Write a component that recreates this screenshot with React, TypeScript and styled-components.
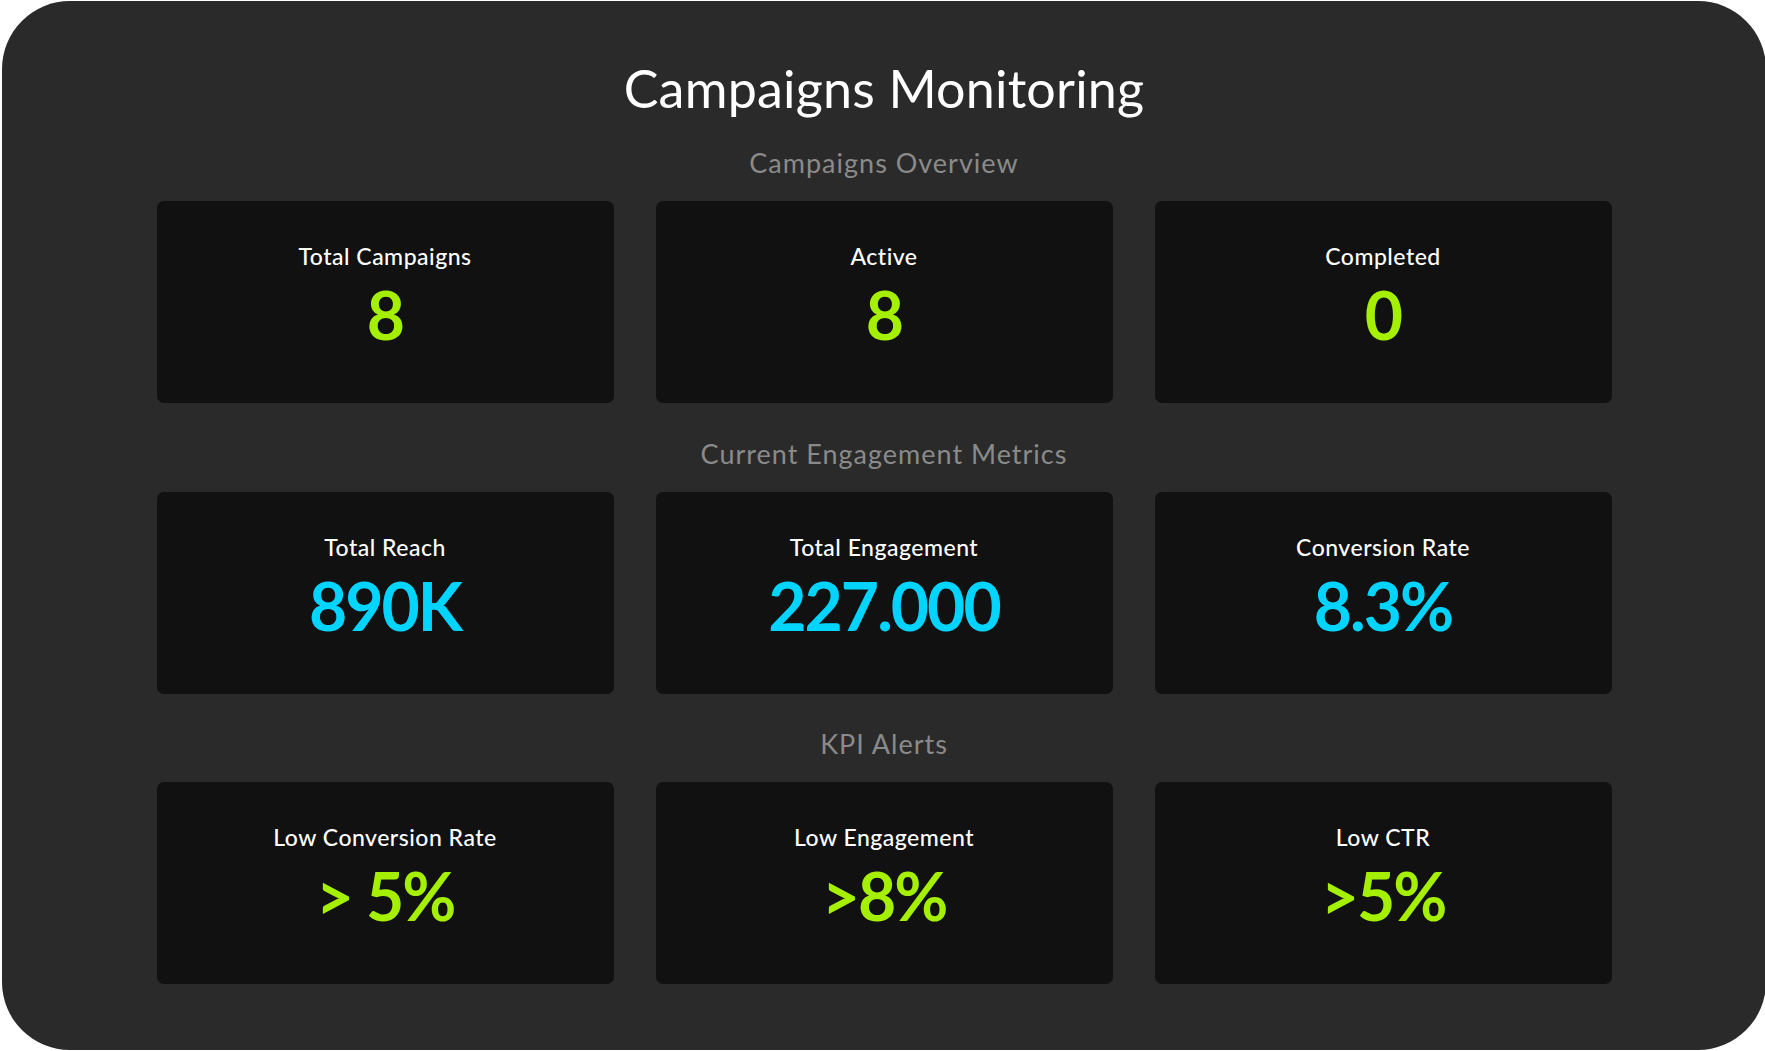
import styled, { createGlobalStyle } from "styled-components";

const GlobalStyle = createGlobalStyle`
  html, body {
    margin: 0;
    padding: 0;
    background: #ffffff;
  }
  body {
    font-family: "Lato", "Noto Sans", sans-serif;
  }
`;

const Panel = styled.main`
  box-sizing: border-box;
  width: 1764px;
  height: 1049px;
  margin: 1px 0 0 2px;
  padding-top: 57px;
  background: #2a2a2a;
  border-radius: 68px;
  display: flex;
  flex-direction: column;
  align-items: center;
`;

const Title = styled.h1`
  margin: 0 0 30px;
  font-size: 52px;
  line-height: 60px;
  font-weight: 400;
  letter-spacing: 0.2px;
  color: #ffffff;
`;

const Section = styled.section`
  display: flex;
  flex-direction: column;
  align-items: center;
  gap: 23px;
  margin-bottom: 35.5px;
`;

const Heading = styled.h2`
  margin: 0;
  font-size: 27px;
  line-height: 30px;
  font-weight: 400;
  letter-spacing: 1px;
  color: #8a8a8a;
`;

const Row = styled.div`
  display: grid;
  grid-template-columns: repeat(3, 457px);
  gap: 42px;
`;

const Card = styled.div`
  box-sizing: border-box;
  height: 202px;
  padding-top: 41px;
  background: #111111;
  border-radius: 7px;
  display: flex;
  flex-direction: column;
  align-items: center;
  gap: 5px;
`;

const Label = styled.div`
  font-size: 23px;
  line-height: 28px;
  font-weight: 500;
  letter-spacing: 0.5px;
  color: #ffffff;
`;

const Value = styled.div<{ $tone: "lime" | "cyan" }>`
  font-size: 66px;
  line-height: 80px;
  font-weight: 700;
  letter-spacing: -2px;
  color: ${({ $tone }) => ($tone === "lime" ? "#a4f000" : "#00d4ff")};
`;

type Metric = { label: string; value: string };

const sections: { heading: string; tone: "lime" | "cyan"; items: Metric[] }[] = [
  {
    heading: "Campaigns Overview",
    tone: "lime",
    items: [
      { label: "Total Campaigns", value: "8" },
      { label: "Active", value: "8" },
      { label: "Completed", value: "0" },
    ],
  },
  {
    heading: "Current Engagement Metrics",
    tone: "cyan",
    items: [
      { label: "Total Reach", value: "890K" },
      { label: "Total Engagement", value: "227.000" },
      { label: "Conversion Rate", value: "8.3%" },
    ],
  },
  {
    heading: "KPI Alerts",
    tone: "lime",
    items: [
      { label: "Low Conversion Rate", value: "> 5%" },
      { label: "Low Engagement", value: ">8%" },
      { label: "Low CTR", value: ">5%" },
    ],
  },
];

export default function App() {
  return (
    <>
      <GlobalStyle />
      <Panel>
        <Title>Campaigns Monitoring</Title>
        {sections.map((s) => (
          <Section key={s.heading}>
            <Heading>{s.heading}</Heading>
            <Row>
              {s.items.map((m) => (
                <Card key={m.label}>
                  <Label>{m.label}</Label>
                  <Value $tone={s.tone}>{m.value}</Value>
                </Card>
              ))}
            </Row>
          </Section>
        ))}
      </Panel>
    </>
  );
}
